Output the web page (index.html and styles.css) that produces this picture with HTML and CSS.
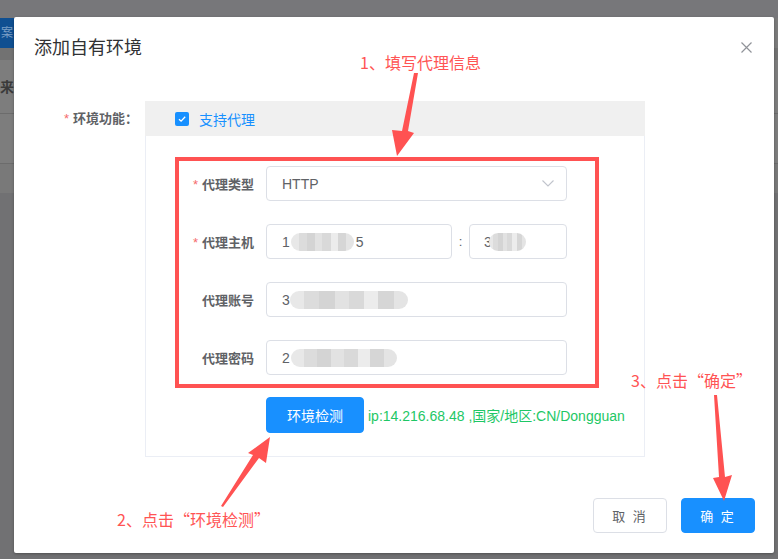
FILE: index.html
```html
<!DOCTYPE html>
<html lang="zh-CN">
<head>
    <meta charset="UTF-8">
    <meta name="viewport" content="width=device-width, initial-scale=1.0">
    <title>添加自有环境</title>
    <link rel="stylesheet" href="styles.css">
</head>
<body>
    <!-- page under the mask, only the edges show -->
    <div class="backdrop">
        <div class="bd-top"></div>
        <div class="bd-bar"><span class="bd-btn">案</span></div>
        <div class="bd-strip"></div>
        <div class="bd-row bd-head"><span>来源</span></div>
        <div class="bd-row"></div>
        <div class="bd-row bd-short"></div>
    </div>

    <div class="dialog">
        <div class="dialog-header">
            <span class="dialog-title">添加自有环境</span>
            <span class="dialog-close">
                <svg width="11" height="11" viewBox="0 0 11 11"><path d="M0.5 0.5L10.5 10.5M10.5 0.5L0.5 10.5" stroke="#909399" stroke-width="1.2" fill="none"/></svg>
            </span>
        </div>

        <div class="dialog-body">
            <div class="form-item">
                <label class="form-label"><i class="req">*</i>环境功能：</label>
                <div class="panel">
                    <div class="panel-head">
                        <span class="checkbox">
                            <svg width="14" height="14" viewBox="0 0 14 14"><path d="M4 7.2L6.1 9.2L10.2 4.8" stroke="#fff" stroke-width="1.3" fill="none"/></svg>
                        </span>
                        <span class="check-label">支持代理</span>
                    </div>
                    <div class="panel-body">
                        <div class="proxy-box">
                            <div class="proxy-row">
                                <label class="proxy-label"><i class="req">*</i>代理类型</label>
                                <div class="input select">
                                    <span>HTTP</span>
                                    <svg class="chevron" width="12" height="7" viewBox="0 0 12 7"><path d="M0.5 0.5L6 6L11.5 0.5" stroke="#c0c4cc" stroke-width="1.1" fill="none"/></svg>
                                </div>
                            </div>
                            <div class="proxy-row">
                                <label class="proxy-label"><i class="req">*</i>代理主机</label>
                                <div class="input host">1<span class="blur blur-host"></span>5</div>
                                <span class="colon">:</span>
                                <div class="input port">3<span class="blur blur-port"></span></div>
                            </div>
                            <div class="proxy-row">
                                <label class="proxy-label">代理账号</label>
                                <div class="input">3<span class="blur blur-user"></span></div>
                            </div>
                            <div class="proxy-row">
                                <label class="proxy-label">代理密码</label>
                                <div class="input">2<span class="blur blur-pass"></span></div>
                            </div>
                        </div>
                        <div class="detect-row">
                            <button class="btn btn-primary btn-detect">环境检测</button>
                            <span class="detect-result">ip:14.216.68.48 ,国家/地区:CN/Dongguan</span>
                        </div>
                    </div>
                </div>
            </div>
        </div>

        <div class="dialog-footer">
            <button class="btn btn-default">取 消</button>
            <button class="btn btn-primary">确 定</button>
        </div>
    </div>

    <!-- tutorial annotations drawn over the dialog -->
    <div class="annotations">
        <div class="note note-1">1、填写代理信息</div>
        <div class="note note-2">2、点击“环境检测”</div>
        <div class="note note-3">3、点击“确定”</div>
        <svg class="arrows" width="778" height="559" viewBox="0 0 778 559">
            <polygon points="414,73 418,73 408,131 414,133 397,156 392,130 402,131" />
            <polygon points="270,437 266,463 259,458 223,507 221,506 253,455 248,453" />
            <polygon points="714,395 717,395 725,477 732,475 724,501 713,478 719,477" />
        </svg>
    </div>
</body>
</html>
```

FILE: styles.css
```css
* {
    box-sizing: border-box;
}

body {
    margin: 0;
    width: 778px;
    height: 559px;
    overflow: hidden;
    position: relative;
    background-color: #717173;
    font-family: "Liberation Sans", "Noto Sans CJK SC", sans-serif;
    color: #606266;
}

/* backdrop */
.bd-top {
    height: 18px;
    background-color: #77777a;
}

.bd-bar {
    height: 30px;
    background-color: #7b7b7b;
}

.bd-btn {
    display: block;
    width: 40px;
    height: 30px;
    background-color: #0f4f91;
    color: #7c9fc6;
    font-size: 12px;
    line-height: 30px;
    padding-left: 1px;
    white-space: nowrap;
}

.bd-strip {
    height: 12px;
    background-color: #727272;
}

.bd-row {
    height: 50px;
    background-color: #7d7d7d;
    border-bottom: 1px solid #6c6c6c;
}

.bd-head {
    height: 54px;
    font-size: 14px;
    font-weight: bold;
    line-height: 54px;
    color: #3a3a3a;
    white-space: nowrap;
}

.bd-short {
    height: 29px;
    background-color: #797979;
    border-bottom: none;
}

/* dialog */
.dialog {
    position: absolute;
    left: 14px;
    top: 17px;
    width: 760px;
    height: 536px;
    background-color: #fff;
    border-radius: 2px;
    box-shadow: 0 1px 3px rgba(0,0,0,0.3);
    display: flex;
    flex-direction: column;
}

.dialog-header {
    display: flex;
    justify-content: space-between;
    align-items: flex-start;
    padding: 19px 22px 0 20px;
}

.dialog-title {
    font-size: 18px;
    line-height: 24px;
    color: #303133;
}

.dialog-close {
    margin-top: 6px;
    width: 11px;
    height: 11px;
    display: flex;
}

.dialog-body {
    padding: 41px 20px 0 20px;
}

.form-item {
    display: flex;
    align-items: flex-start;
}

.form-label {
    flex: 0 0 111px;
    text-align: right;
    padding-right: 7px;
    font-size: 13px;
    font-weight: bold;
    line-height: 35px;
    color: #606266;
}

.req {
    font-style: normal;
    font-weight: normal;
    color: #f56c6c;
    margin-right: 4px;
}

.panel {
    width: 500px;
}

.panel-head {
    height: 35px;
    background-color: #f0f0f0;
    display: flex;
    align-items: center;
    padding-left: 30px;
}

.checkbox {
    width: 14px;
    height: 14px;
    border-radius: 2px;
    background-color: #1890ff;
    display: flex;
}

.check-label {
    margin-left: 10px;
    font-size: 14px;
    color: #1890ff;
}

.panel-body {
    border: 1px solid #ebeef5;
    border-top: none;
    padding: 21px 0 23px 29px;
}

.proxy-box {
    width: 424px;
    border: 4px solid #ff5252;
    padding: 5px 28px 9px 0;
}

.proxy-row {
    display: flex;
    align-items: center;
    height: 35px;
    margin-bottom: 23px;
}

.proxy-row:last-child {
    margin-bottom: 0;
}

.proxy-label {
    flex: 0 0 87px;
    text-align: right;
    padding-right: 12px;
    font-size: 13px;
    font-weight: bold;
    color: #606266;
}

.input {
    flex: 1;
    height: 35px;
    border: 1px solid #dcdfe6;
    border-radius: 4px;
    padding-left: 15px;
    font-size: 14px;
    color: #606266;
    display: flex;
    align-items: center;
}

.select {
    justify-content: space-between;
    padding-right: 12px;
}

.host {
    flex: 0 0 186px;
}

.colon {
    flex: 0 0 17px;
    text-align: center;
    font-size: 13px;
}

.port {
    flex: 0 0 98px;
    padding-left: 14px;
}

.blur {
    display: inline-block;
    height: 18px;
    border-radius: 9px;
    filter: blur(0.6px);
    background: linear-gradient(90deg, #e8e8e8 0 12%, #dcdcdc 12% 25%, #d4d4d4 25% 38%, #e2e2e2 38% 50%, #d9d9d9 50% 63%, #ececec 63% 75%, #d6d6d6 75% 88%, #e4e4e4 88%);
}

.blur-host {
    width: 63px;
    margin: 0 2px 0 1px;
}

.blur-port {
    width: 37px;
    margin-left: -3px;
}

.blur-user {
    width: 118px;
    margin-left: 0;
}

.blur-pass {
    width: 106px;
    margin-left: 1px;
}

.detect-row {
    display: flex;
    align-items: center;
    margin-top: 9px;
    padding-left: 91px;
}

.btn {
    height: 36px;
    border-radius: 4px;
    font-family: "Liberation Sans", "Noto Sans CJK SC", sans-serif;
    font-size: 14px;
    cursor: pointer;
}

.btn-primary {
    background-color: #1890ff;
    border: 1px solid #1890ff;
    color: #fff;
}

.btn-default {
    background-color: #fff;
    border: 1px solid #dcdfe6;
    color: #606266;
}

.btn-detect {
    width: 98px;
}

.detect-result {
    margin-left: 4px;
    font-size: 14px;
    color: #1ec765;
    white-space: nowrap;
}

.dialog-footer {
    margin-top: auto;
    display: flex;
    justify-content: flex-end;
    gap: 14px;
    padding: 0 19px 20px 0;
}

.dialog-footer .btn {
    width: 74px;
    height: 35px;
    font-size: 13px;
    letter-spacing: 2px;
}

/* annotations */
.annotations {
    position: absolute;
    left: 0;
    top: 0;
    width: 778px;
    height: 559px;
    pointer-events: none;
}

.note {
    position: absolute;
    font-family: "Noto Sans CJK SC", sans-serif;
    font-size: 16px;
    line-height: 20px;
    color: #ff5454;
    white-space: nowrap;
}

.note-1 {
    left: 360px;
    top: 52px;
}

.note-2 {
    left: 117px;
    top: 509px;
}

.note-3 {
    left: 631px;
    top: 370px;
}

.arrows {
    position: absolute;
    left: 0;
    top: 0;
}

.arrows polygon {
    fill: #ff5252;
}
```
